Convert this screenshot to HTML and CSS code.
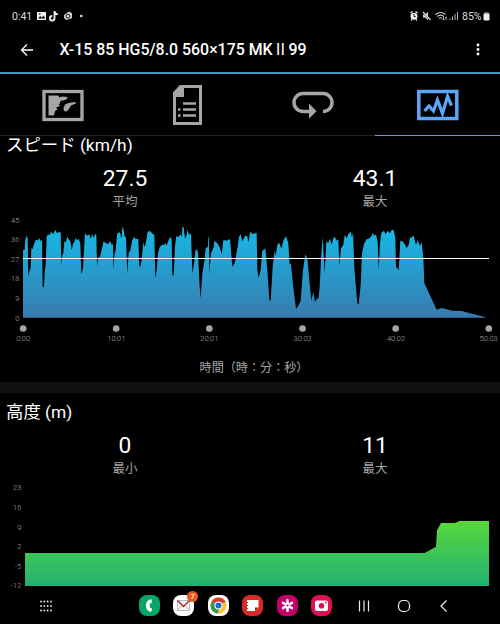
FILE: index.html
```html
<!DOCTYPE html>
<html lang="ja">
<head>
    <meta charset="utf-8">
    <title>X-15 85 HG5/8.0 560×175 MKⅡ99</title>
    <link rel="stylesheet" href="styles.css">
</head>
<body>
    <div class="status-bar">
        <span class="clock">0:41</span>
        <svg class="notif" width="50" height="12" viewBox="0 0 50 12">
            <path d="M0 2h9v8H0z" fill="#eee"/>
            <path d="M1.2 8.6l2-2.5 1.6 1.6 1.8-2.2 1.6 3z" fill="#000"/>
            <circle cx="2.8" cy="4" r=".8" fill="#000"/>
            <path d="M17.5 1v7.3a2.3 2.3 0 1 1-2.3-2.3M17.5 1.5c.3 1.7 1.5 2.6 3.3 2.8" fill="none" stroke="#eee" stroke-width="1.8"/>
            <path d="M27 5l5-3.5 3 1.7v5L29.5 10 27 8z" fill="#ccc"/>
            <circle cx="31" cy="6.2" r="1.9" fill="none" stroke="#000" stroke-width=".8"/>
            <circle cx="44.3" cy="6" r="1.3" fill="#ddd"/>
        </svg>
        <svg class="signals" width="49" height="12" viewBox="0 0 49 12">
            <circle cx="4" cy="6.3" r="3.5" fill="#eee"/>
            <path d="M.5 3l2-1.5M7.5 3l-2-1.5M1 10.5l1-1M7 10.5l-1-1" stroke="#eee" stroke-width="1.3"/>
            <path d="M4 4v2.5h1.7" fill="none" stroke="#000" stroke-width=".9"/>
            <path d="M13 4.5h2l3-2.500v8l-3-2.500h-2z" fill="#ddd"/>
            <path d="M12.5 2l8 8" stroke="#000" stroke-width="1.6"/>
            <path d="M13 2l7.5 8" stroke="#ddd" stroke-width="1.2"/>
            <path d="M25.500 4.500q5-4 10 0M27.200 6.500q3.300-2.700 6.600 0M29 8.400q1.500-1.300 3 0" fill="none" stroke="#ccc" stroke-width="1.2"/>
            <path d="M33.5 6.500v3.500M36 7v3M32.500 9l1 1 1-1M35 8l1-1 1 1" fill="none" stroke="#ccc" stroke-width=".8"/>
            <path d="M40 8.500V10M42.500 6.500V10M45 4V10M47.500 2V10" stroke="#ccc" stroke-width=".9"/>
        </svg>
        <span class="percent">85%</span>
        <svg width="7" height="10" viewBox="0 0 7 10">
            <path d="M1.5 1h4v1h.5v2H1V2h.5z" fill="#666"/>
            <rect x=".5" y="2.5" width="6" height="7" rx="1" fill="#eee"/>
        </svg>
    </div>

    <header class="app-bar">
        <svg class="back" width="14" height="14" viewBox="0 0 14 14">
            <path d="M13 7H2M7 1.500L1.500 7 7 12.500" fill="none" stroke="#fff" stroke-width="1.3"/>
        </svg>
        <h1>X-15 85 HG5/8.0 560×175 MK<span class="numeral">Ⅱ</span>99</h1>
        <svg class="more" width="4" height="14" viewBox="0 0 4 14" fill="#fff">
            <circle cx="2" cy="2" r="1.4"/>
            <circle cx="2" cy="6.5" r="1.4"/>
            <circle cx="2" cy="11" r="1.4"/>
        </svg>
    </header>

    <nav class="tabs">
        <div class="tab">
            <svg width="42" height="42" viewBox="0 0 42 42">
                <rect x="2" y="7.5" width="38" height="28" fill="none" stroke="#a6a6a6" stroke-width="3.3"/>
                <path d="M6.500 11.500H16l1.500 1.800 3-.8 5 .5-1 2.500-6 1.500-.5 2.300-1.500 1 1.500 1.500-4 2 1.500 1.500-2.500 2-1 4.200H6.500z" fill="#a6a6a6"/>
                <path d="M21.500 24l1.500-3.500 3.500-1.500 7-1 .5 1.500-5 2-2 3.500-2.500 2.500-2.500-.5z" fill="#a6a6a6"/>
            </svg>
        </div>
        <div class="tab">
            <svg width="42" height="42" viewBox="0 0 42 42">
                <path d="M13.500 2.500H33.500v37H7.500V9z" fill="none" stroke="#a6a6a6" stroke-width="3"/>
                <path d="M13.500 2H17v11H6V9z" fill="#a6a6a6"/>
                <path d="M16 19.500h13M16 25.500h13M16 31.500h13" stroke="#a6a6a6" stroke-width="2.3"/>
                <path d="M11 25.500h2.500M11 31.500h2.500" stroke="#a6a6a6" stroke-width="2.3"/>
            </svg>
        </div>
        <div class="tab">
            <svg width="42" height="42" viewBox="0 0 42 42">
                <path d="M17 27.500h-6a9 9 0 0 1 0-18h20a9 9 0 0 1 0 18" fill="none" stroke="#a6a6a6" stroke-width="3.5"/>
                <path d="M17 19.500L24.500 27.200l-7.500 7.600z" fill="#a6a6a6"/>
            </svg>
        </div>
        <div class="tab active">
            <svg width="42" height="42" viewBox="0 0 42 42">
                <rect x="1.8" y="7.5" width="38" height="27" fill="none" stroke="#5ba6f8" stroke-width="3.5"/>
                <path d="M7.500 27l4.500-5 4.500 5 4-11 5 13.500 5-17 4 9" fill="none" stroke="#5ba6f8" stroke-width="3.200"/>
            </svg>
        </div>
    </nav>

    <section class="speed">
        <h2>スピード (km/h)</h2>
        <div class="stats">
            <div class="stat"><b>27.5</b><span>平均</span></div>
            <div class="stat"><b>43.1</b><span>最大</span></div>
        </div>
        <!-- three units per pixel -->
        <svg class="chart" width="500" height="140" viewBox="0 0 1500 420">
            <defs>
                <linearGradient id="blue" x1="0" y1="50" x2="0" y2="323" gradientUnits="userSpaceOnUse">
                    <stop offset="0" stop-color="#16b9e7"/>
                    <stop offset="1" stop-color="#387baf"/>
                </linearGradient>
            </defs>
            <polygon fill="url(#blue)" points="69,323 69,121 74,119 76,88 80,78 83,84 85,200 88,186 92,172 94,114 98,117 103,100 107,90 114,91 118,84 121,93 126,90 128,232 132,230 134,185 137,165 140,80 144,73 149,75 154,65 159,73 166,60 171,70 178,65 182,68 184,165 187,135 190,128 193,94 198,97 202,79 206,88 211,93 215,120 219,103 224,94 227,84 231,90 236,87 241,100 244,193 249,175 255,70 262,77 268,73 272,87 277,72 281,84 286,71 289,75 291,170 294,145 300,140 306,115 311,93 316,99 325,102 330,93 335,104 339,103 340,178 344,128 347,122 351,73 356,67 361,70 363,84 365,80 367,50 371,60 374,80 378,82 382,191 386,128 391,122 396,94 402,80 406,86 415,88 418,170 422,168 425,148 430,96 434,112 438,96 443,65 450,63 458,72 463,74 466,205 470,180 474,130 479,112 485,104 493,105 
                495,98 500,106 507,88 512,80 515,90 517,195 521,197 525,108 529,78 535,82 541,73 546,80 547,50 551,52 555,86 560,76 562,59 567,74 573,70 577,190 583,155 586,124 590,117 594,127 599,230 602,265 607,190 613,155 617,115 624,110 625,80 627,80 628,188 633,130 641,112 643,93 651,98 660,113 665,133 670,90 680,92 690,87 697,170 704,160 713,110 717,80 722,73 727,94 735,78 741,77 746,97 750,65 757,72 770,69 772,180 776,203 782,180 787,122 796,115 802,180 808,270 812,272 818,170 824,121 827,138 832,105 838,98 844,116 850,92 858,78 865,100 869,163 873,162 879,225 888,297 895,287 902,272 909,180 916,133 922,145 928,210 934,272 940,245 945,277 951,265 955,268 959,230 964,130 968,80 974,188 979,95 985,98
                990,86 995,104 1000,85 1004,80 1010,92 1015,88 1018,168 1023,115 1030,105 1034,75 1040,85 1045,72 1052,65 1056,82 1059,67 1063,175 1072,280 1076,283 1082,225 1086,130 1092,102 1100,88 1108,85 1115,78 1118,68 1123,77 1128,73 1133,95 1136,180 1140,100 1144,68 1152,62 1157,73 1163,63 1170,70 1175,60 1181,60 1186,85 1188,170 1196,180 1201,92 1210,95 1220,114 1226,105 1230,85 1241,77 1248,105 1253,90 1260,108 1265,97 1270,145 1273,220 1310,299 1325,294 1358,302 1385,303 1454,321 1456,323"/>
            <path d="M69 145.500H1467" stroke="#fff" stroke-width="3"/>
            <g class="y-axis">
                <text x="58" y="38">45</text>
                <text x="58" y="97">36</text>
                <text x="58" y="156">27</text>
                <text x="58" y="214">18</text>
                <text x="58" y="273">9</text>
                <text x="58" y="332">0</text>
            </g>
            <g fill="#a6a6a6">
                <circle cx="69.5" cy="355.5" r="10"/>
                <circle cx="348.5" cy="355.5" r="10"/>
                <circle cx="628" cy="355.5" r="10"/>
                <circle cx="907.5" cy="355.5" r="10"/>
                <circle cx="1187" cy="355.5" r="10"/>
                <circle cx="1466.5" cy="355.5" r="10"/>
            </g>
            <g class="x-axis">
                <text x="69.5" y="392">0:00</text>
                <text x="349" y="392">10:01</text>
                <text x="628" y="392">20:01</text>
                <text x="908" y="392">30:02</text>
                <text x="1188" y="392">40:02</text>
                <text x="1466" y="392">50:03</text>
            </g>
        </svg>
        <p class="axis-title">時間（時：分：秒）</p>
    </section>

    <section class="altitude">
        <h2>高度 (m)</h2>
        <div class="stats">
            <div class="stat"><b>0</b><span>最小</span></div>
            <div class="stat"><b>11</b><span>最大</span></div>
        </div>
        <svg class="chart" width="500" height="109" viewBox="0 0 1500 327">
            <defs>
                <linearGradient id="green" x1="0" y1="132" x2="0" y2="327" gradientUnits="userSpaceOnUse">
                    <stop offset="0" stop-color="#58d83c"/>
                    <stop offset="1" stop-color="#22b173"/>
                </linearGradient>
            </defs>
            <polygon fill="url(#green)" points="75,327 75,228 1274,228 1308,209 1311,160 1323,138 1366,138 1378,132 1467,132 1467,327"/>
            <g class="y-axis">
                <text x="64" y="40">23</text>
                <text x="64" y="99">16</text>
                <text x="64" y="158">9</text>
                <text x="64" y="217">2</text>
                <text x="64" y="276">-5</text>
                <text x="64" y="334">-12</text>
            </g>
        </svg>
    </section>

    <footer class="nav-bar">
        <svg class="apps" width="12" height="12" viewBox="0 0 12 12" fill="#eee">
            <circle cx="1" cy="1.5" r=".9"/><circle cx="4.3" cy="1.5" r=".9"/><circle cx="7.7" cy="1.5" r=".9"/><circle cx="11" cy="1.5" r=".9"/>
            <circle cx="1" cy="6" r=".9"/><circle cx="4.3" cy="6" r=".9"/><circle cx="7.7" cy="6" r=".9"/><circle cx="11" cy="6" r=".9"/>
            <circle cx="1" cy="10.5" r=".9"/><circle cx="4.3" cy="10.5" r=".9"/><circle cx="7.7" cy="10.5" r=".9"/><circle cx="11" cy="10.5" r=".9"/>
        </svg>
        <div class="dock">
            <div class="app phone">
                <svg width="21" height="21" viewBox="0 0 21 21">
                    <path d="M12.500 4.500l.5 3-1.800.8c-.7 1.500-.7 3 0 4.500l1.800.8-.5 3c-3 .5-5.500-2-5.500-6s2.500-6.600 5.500-6.100z" fill="#fff"/>
                </svg>
            </div>
            <div class="app mail">
                <svg width="21" height="21" viewBox="0 0 21 21">
                    <rect x="4.5" y="5.5" width="12" height="10" fill="#f4f4f4" stroke="#bbb"/>
                    <path d="M4.500 15l4.500-4.500M16.500 15L12 10.500" stroke="#bbb"/>
                    <path d="M4.500 5.500l6 6 6-6" fill="none" stroke="#a5243d" stroke-width="1.4"/>
                </svg>
                <span class="badge">7</span>
            </div>
            <div class="app chrome">
                <svg width="21" height="21" viewBox="0 0 21 21">
                    <circle cx="10.5" cy="10.5" r="8" fill="#fbc22d"/>
                    <path d="M10.500 10.500L3.600 6.500a8 8 0 0 1 13.800 0z" fill="#d83b30"/>
                    <path d="M10.500 10.500L3.600 6.500a8 8 0 0 0 6.400 12z" fill="#2e9b50"/>
                    <path d="M10.500 6.500h6.900" stroke="#d83b30" stroke-width="1"/>
                    <circle cx="10.5" cy="10.5" r="4" fill="#fff"/>
                    <circle cx="10.5" cy="10.5" r="3" fill="#246bd0"/>
                </svg>
            </div>
            <div class="app notes">
                <svg width="21" height="21" viewBox="0 0 21 21">
                    <path d="M5 5h11.500v7.500L13 16H5z" fill="#fff"/>
                    <path d="M13 16v-3.500h3.500z" fill="#8e1c19"/>
                    <path d="M4.500 7.500h1.500M4.500 10.500h1.500M4.500 13.500h1.500" stroke="#d92b25" stroke-width="1"/>
                </svg>
            </div>
            <div class="app gallery">
                <svg width="21" height="21" viewBox="0 0 21 21">
                    <path d="M10.500 5.300v10.400M6 7.900l9 5.200M6 13.100l9-5.200" stroke="#fff" stroke-width="2.600" stroke-linecap="round"/>
                    <circle cx="10.5" cy="10.5" r="1" fill="#c4006a"/>
                </svg>
            </div>
            <div class="app camera">
                <svg width="21" height="21" viewBox="0 0 21 21">
                    <rect x="4" y="5.5" width="13" height="10.5" rx="2" fill="#fff"/>
                    <circle cx="10.5" cy="10.7" r="2.8" fill="#de1050"/>
                    <circle cx="14.8" cy="7.5" r=".9" fill="#de1050"/>
                </svg>
            </div>
        </div>
        <div class="keys">
            <svg width="14" height="14" viewBox="0 0 14 14">
                <path d="M2.500 1.500v11M7 1.500v11M11.500 1.500v11" stroke="#eee" stroke-width="1.2"/>
            </svg>
            <svg width="14" height="14" viewBox="0 0 14 14">
                <rect x="1.5" y="1.5" width="11" height="11" rx="4.5" fill="none" stroke="#eee" stroke-width="1.2"/>
            </svg>
            <svg width="14" height="14" viewBox="0 0 14 14">
                <path d="M9.500 1.500L4 7l5.500 5.500" fill="none" stroke="#eee" stroke-width="1.2"/>
            </svg>
        </div>
    </footer>
</body>
</html>
```
FILE: styles.css
```css
* {
    box-sizing: border-box;
}
body {
    margin: 0;
    width: 500px;
    height: 624px;
    overflow: hidden;
    display: flex;
    flex-direction: column;
    background: #000;
    color: #fff;
    font-family: Roboto, "Noto Sans CJK JP", sans-serif;
}
svg { display: block; flex: none; }
h1, h2, p { margin: 0; }

.status-bar {
    height: 32px;
    padding: 0 10.5px 0 12px;
    display: flex;
    align-items: center;
    font-size: 10.5px;
    color: #ddd;
}
.clock { width: 25px; }
.signals { margin-left: auto; }
.percent { margin: 0 1px 0 3px; }

.app-bar {
    height: 42px;
    padding: 0 20px 5px;
    display: flex;
    align-items: center;
    border-bottom: 2px solid #4596bf;
}
.app-bar h1 {
    margin-left: 25.5px;
    font-size: 15.9px;
    font-weight: 500;
    line-height: 24px;
    white-space: nowrap;
}
.numeral { font-weight: 400; }
.more { margin-left: auto; }

.tabs {
    display: flex;
    height: 62px;
}
.tab {
    flex: 1;
    display: flex;
    justify-content: center;
    align-items: center;
    border-bottom: 1px solid #222;
}
.tab.active { border-bottom-color: #6b9ce0; }

section { flex: none; }
section h2 {
    padding-left: 6px;
    font-size: 17.4px;
    font-weight: 400;
    line-height: 18px;
}
.speed { height: 246px; }
.altitude {
    height: 204px;
    padding-top: 10px;
    border-top: 11px solid #111;
}

.stats {
    display: flex;
    height: 56px;
    padding-top: 11px;
}
.stat {
    flex: 1;
    text-align: center;
}
.stat b, .stat span { display: block; }
.stat b {
    font-size: 22.8px;
    font-weight: 400;
    line-height: 28px;
}
.stat span {
    font-size: 12.5px;
    line-height: 18px;
    color: #a6a6a6;
}

/* font sizes are in chart units, a third of a pixel */
.chart { overflow: visible; }
.chart text {
    font-size: 22.5px;
    font-weight: 300;
    fill: #aaa;
}
.y-axis text { text-anchor: end; }
.x-axis text { text-anchor: middle; }
.axis-title {
    padding: 9px 0 0 8px;
    text-align: center;
    font-size: 12.1px;
    line-height: 18px;
    color: #a6a6a6;
}

.nav-bar {
    height: 38px;
    display: flex;
    align-items: center;
    padding: 1px 0 0 40px;
}
.dock {
    display: flex;
    gap: 13.5px;
    margin-left: 86.5px;
}
.app {
    position: relative;
    width: 21px;
    height: 21px;
    border-radius: 8px;
}
.phone { background: #07a566; }
.mail, .chrome { background: #fff; }
.notes { background: #d92b25; }
.gallery { background: #c4006a; }
.camera { background: #de1050; }
.badge {
    position: absolute;
    top: -4px;
    right: -4px;
    width: 11px;
    height: 11px;
    border-radius: 50%;
    background: #e65c1c;
    font-size: 8px;
    line-height: 11px;
    text-align: center;
}
.keys {
    display: flex;
    gap: 26px;
    margin-left: 25px;
}
```
